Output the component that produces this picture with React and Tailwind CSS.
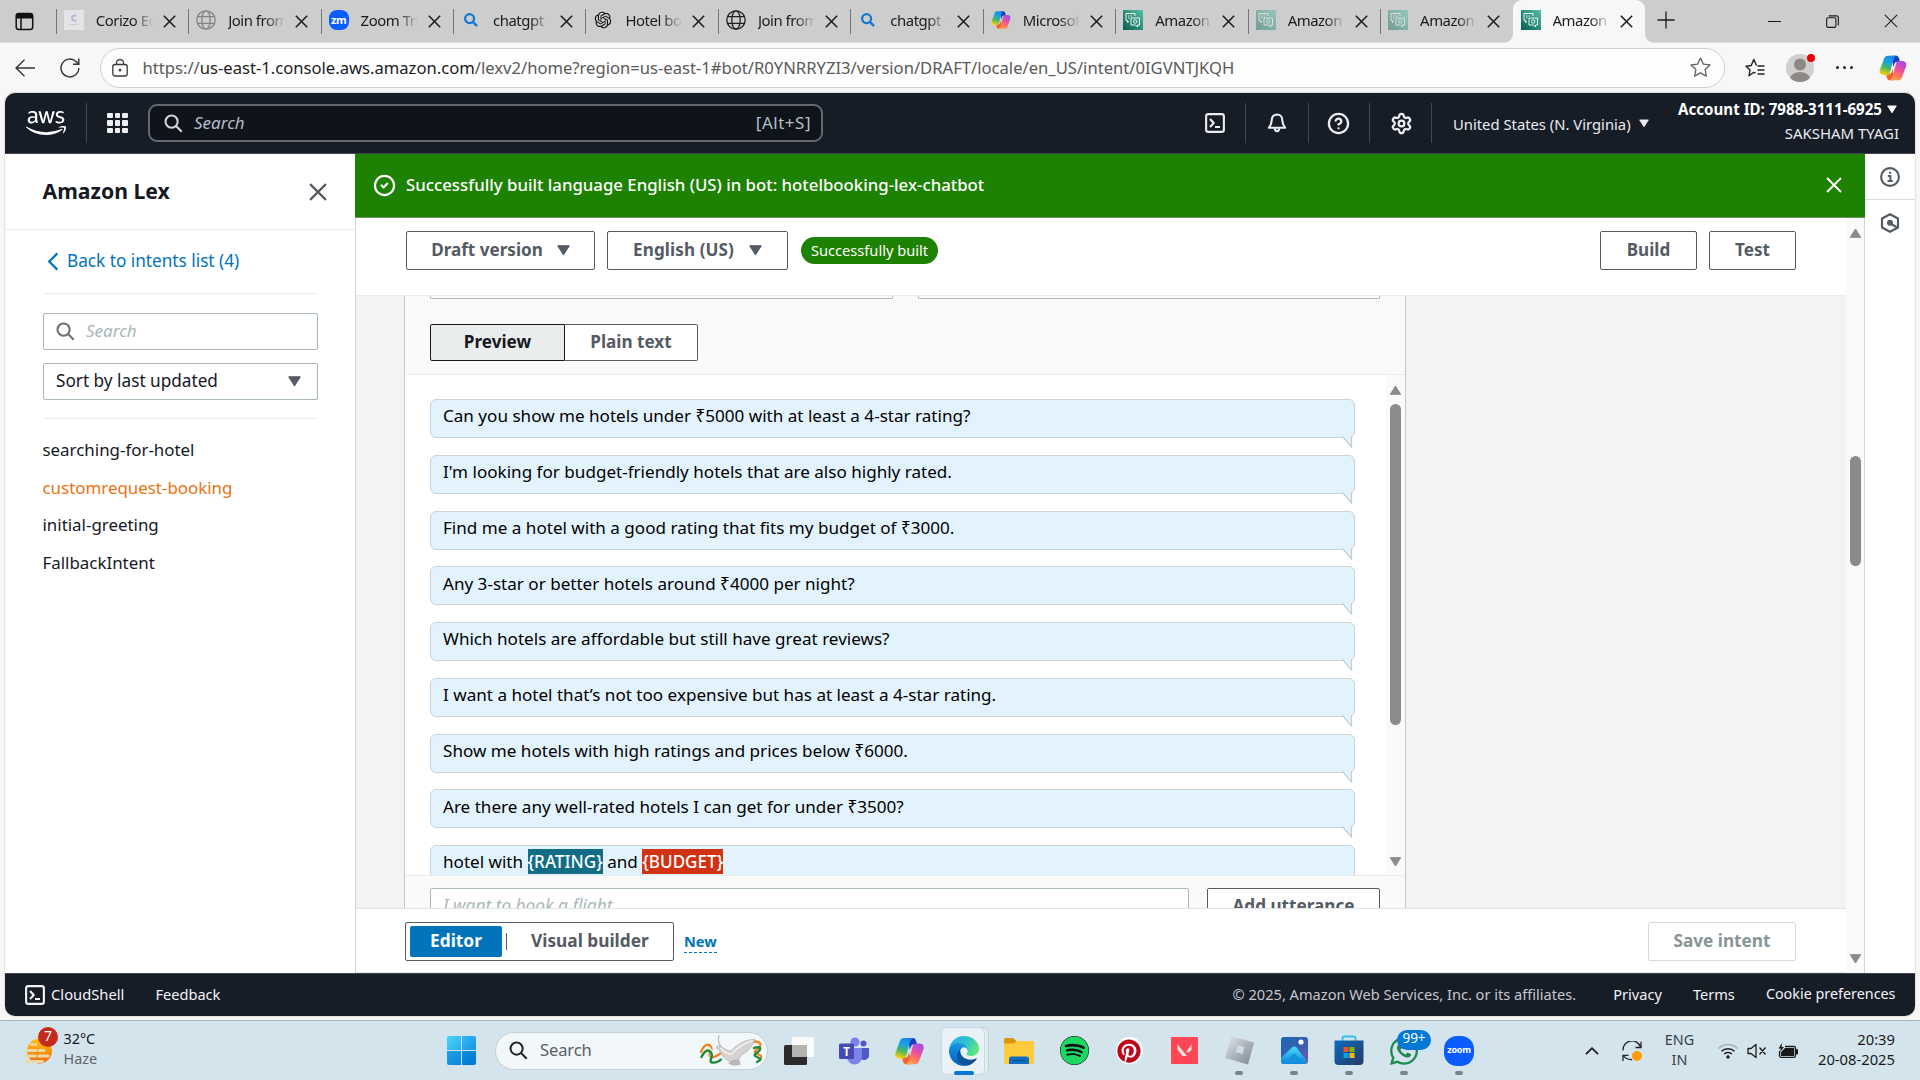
import { CircleHelp, CircleCheck, Settings } from "lucide-react";
import { FaAws, FaSpotify, FaPinterest, FaWhatsapp } from "react-icons/fa";
import { RiOpenaiFill } from "react-icons/ri";

/* ---------- small shared drawings ---------- */

function Cross({ className, w = 1.6 }) {
  return (
    <svg viewBox="0 0 16 16" className={className} fill="none" stroke="currentColor" strokeWidth={w}>
      <path d="M1 1 15 15M15 1 1 15" />
    </svg>
  );
}

function Caret({ className, up = false }) {
  return (
    <svg viewBox="0 0 12 10" className={className} fill="currentColor" stroke="currentColor" strokeWidth="1" strokeLinejoin="round">
      {up ? <path d="M6 1 11.2 9.3H.8Z" /> : <path d="M.8.7h10.4L6 9Z" />}
    </svg>
  );
}

function Magnifier({ className, w = 2 }) {
  return (
    <svg viewBox="0 0 20 20" className={className} fill="none" stroke="currentColor" strokeWidth={w}>
      <circle cx="8" cy="8" r="6.4" />
      <path d="m12.7 12.7 6 6" />
    </svg>
  );
}

function Globe({ className }) {
  return (
    <svg viewBox="0 0 20 20" className={className} fill="none" stroke="currentColor" strokeWidth="1.3">
      <circle cx="10" cy="10" r="9.2" />
      <ellipse cx="10" cy="10" rx="4.2" ry="9.2" />
      <path d="M1.6 6.6h16.8M1.6 13.4h16.8" />
    </svg>
  );
}

function Copilot({ className, id }) {
  return (
    <svg viewBox="0 0 32 32" className={className}>
      <defs>
        <linearGradient id={id + "a"} x1=".6" y1="0" x2=".3" y2="1">
          <stop offset="0" stopColor="#1f86e8" />
          <stop offset=".35" stopColor="#18a5e0" />
          <stop offset=".65" stopColor="#4fb75a" />
          <stop offset="1" stopColor="#ffd20a" />
        </linearGradient>
        <linearGradient id={id + "b"} x1=".8" y1="0" x2=".3" y2="1">
          <stop offset="0" stopColor="#a04df0" />
          <stop offset=".45" stopColor="#ee4f9a" />
          <stop offset=".75" stopColor="#ff7a5c" />
          <stop offset="1" stopColor="#ffa552" />
        </linearGradient>
      </defs>
      <path d="M14 2h5.500c2.500 0 3.300 2 4 5l.5 2h-3c-2 0-3 .6-3.600 2.600L16.500 15Z" fill="#1741c0" />
      <path d="M18 30h-5.500c-2.500 0-3.300-2-4-5L8 23h3c2 0 3-.6 3.600-2.600L15.500 17Z" fill="#f4602f" />
      <path d="M9.800 2C7 2 5.700 4.500 4.800 8L1.200 17.500C0 21 1.500 24 5.500 24H9c2 0 3-1 3.600-3L16 8c1-4 2.500-6 5-6Z" fill={`url(#${id}a)`} />
      <path d="M22.200 30c2.800 0 4.100-2.500 5-6l3.600-9.500C32 11 30.500 8 26.500 8H23c-2 0-3 1-3.600 3L16 24c-1 4-2.500 6-5 6Z" fill={`url(#${id}b)`} />
    </svg>
  );
}

function LexIcon({ className }) {
  return (
    <svg viewBox="0 0 20 20" className={className}>
      <defs>
        <linearGradient id="lex" x1="0" y1="1" x2="1" y2="0">
          <stop offset="0" stopColor="#055f4e" />
          <stop offset="1" stopColor="#56c0a7" />
        </linearGradient>
      </defs>
      <rect width="20" height="20" fill="url(#lex)" />
      <g fill="none" stroke="#fff" strokeWidth=".9">
        <path d="M6 11.500 4.500 12.500V10.500H3V3.500H12V6M5 6h1.500M7.500 6H9M5 8h1.500" />
        <path d="M8 8H16.500V15H14.500V17L12.500 15H8Z" />
        <circle cx="12.200" cy="11.500" r="1.700" />
      </g>
    </svg>
  );
}

function ShellIcon({ className }) {
  return (
    <svg viewBox="0 0 16 16" className={className} fill="none" stroke="currentColor" strokeWidth="1.700" strokeLinejoin="round">
      <rect x=".9" y=".9" width="14.200" height="14.200" rx="1.800" />
      <path d="m4 4.800 3 3.200-3 3.200M8 11.200h4" />
    </svg>
  );
}

function BellIcon({ className }) {
  return (
    <svg viewBox="0 0 16 16" className={className} fill="none" stroke="currentColor" strokeWidth="1.700" strokeLinejoin="round">
      <path d="M8 1.200c-2.500 0-4.200 1.800-4.200 4.300 0 3-1.100 4.600-2.300 6.300h13c-1.200-1.700-2.300-3.300-2.300-6.300C12.200 3 10.500 1.200 8 1.200Z" />
      <path d="M6.300 12.200c0 3.200 3.400 3.200 3.400 0" />
    </svg>
  );
}

/* ---------- browser chrome ---------- */

const tabs = [
  ["corizo", "Corizo Ed"],
  ["globeGray", "Join from"],
  ["zoom", "Zoom Tru"],
  ["search", "chatgpt -"],
  ["openai", "Hotel boo"],
  ["globe", "Join from"],
  ["search", "chatgpt -"],
  ["copilot", "Microsoft"],
  ["lex", "Amazon"],
  ["lexFaded", "Amazon"],
  ["lexFaded", "Amazon"],
  ["lex", "Amazon"],
];

function TabIcon({ kind }) {
  switch (kind) {
    case "corizo":
      return (
        <div className="flex h-5 w-5 flex-col items-center justify-center bg-[#e4e4e6]">
          <svg viewBox="0 0 20 20" className="h-5 w-5" fill="none">
            <path d="M12.500 5.500H10C7.500 5.500 7.500 10.500 10 10.500H12.500" stroke="#c3b4d8" strokeWidth="2.200" />
            <path d="M5.500 14.500h9" stroke="#cfcad6" strokeWidth="1" />
          </svg>
        </div>
      );
    case "globeGray":
      return <Globe className="h-5 w-5 text-[#828282]" />;
    case "globe":
      return <Globe className="h-5 w-5 text-[#1f1f1f]" />;
    case "zoom":
      return (
        <div className="flex h-5 w-5 items-center justify-center rounded-[8px] bg-[#0b5cff] pb-[2px] text-[11px] font-bold leading-none tracking-[-0.5px] text-white">
          zm
        </div>
      );
    case "search":
      return (
        <div className="flex h-5 w-5 items-center justify-center">
          <Magnifier className="h-[14px] w-[14px] text-[#1377d1]" w={3.2} />
        </div>
      );
    case "openai":
      return <RiOpenaiFill className="h-5 w-5 text-[#111]" />;
    case "copilot":
      return <Copilot className="h-5 w-5" id="cpt" />;
    case "lexFaded":
      return <LexIcon className="h-5 w-5 opacity-45" />;
    default:
      return <LexIcon className="h-5 w-5" />;
  }
}

function Tab({ kind, label, active, divider }) {
  return (
    <div className="relative flex h-[42px] w-[132.45px] shrink-0 items-center pl-[8px]">
      {active && (
        <div className="absolute inset-x-0 top-0 bottom-[-2px] rounded-t-[9px] bg-[#f7f7f7]">
          <svg viewBox="0 0 9 9" className="absolute bottom-px left-[-9px] h-[9px] w-[9px]">
            <path d="M9 0v9H0a9 9 0 0 0 9-9Z" fill="#f7f7f7" />
          </svg>
          <svg viewBox="0 0 9 9" className="absolute right-[-9px] bottom-px h-[9px] w-[9px]">
            <path d="M0 0v9h9a9 9 0 0 1-9-9Z" fill="#f7f7f7" />
          </svg>
        </div>
      )}
      {divider && <div className="absolute top-[9px] left-0 h-[25px] w-px bg-[#757575]" />}
      <div className="relative mt-[-2px] flex items-center">
        <TabIcon kind={kind} />
        <div className="ml-[12px] w-[57px] overflow-hidden text-[14.900px] leading-5 tracking-[-0.45px] whitespace-nowrap text-[#1b1b1b] [mask-image:linear-gradient(to_right,black_65%,transparent)]">
          {label}
        </div>
        <Cross className="mt-[2px] ml-[10px] h-[13px] w-[13px] text-[#1b1b1b]" w={1.9} />
      </div>
    </div>
  );
}

function TabBar() {
  return (
    <div className="flex h-[42px] shrink-0 items-center bg-[#cdcdcd]">
      <div className="flex w-[55.700px] shrink-0 pl-[15px]">
        <svg viewBox="0 0 19 19" className="h-[19px] w-[19px]" fill="none" stroke="#111" strokeWidth="1.500">
          <rect x="1.200" y="1.500" width="16.500" height="16" rx="2.500" />
          <path d="M1.500 3.500h16M1.500 5h16" strokeWidth="3" />
          <path d="M6 6v11" />
        </svg>
      </div>
      {tabs.map(([kind, label], i) => (
        <Tab key={i} kind={kind} label={label} active={i === 11} divider={i < 11} />
      ))}
      <svg viewBox="0 0 18 18" className="mt-[-3px] ml-[12px] h-[18px] w-[18px] shrink-0" stroke="#1b1b1b" strokeWidth="1.300">
        <path d="M9 .5v17M.5 9h17" />
      </svg>
      <div className="ml-auto flex items-center pr-[22px] text-[#1b1b1b]">
        <div className="h-px w-[13px] bg-[#1b1b1b]" />
        <svg viewBox="0 0 14 14" className="ml-[45px] h-[13px] w-[13px]" fill="none" stroke="currentColor" strokeWidth="1.200">
          <rect x=".7" y="3" width="10" height="10.300" rx="1.500" />
          <path d="M3 1h8.300a2 2 0 0 1 2 2v8" />
        </svg>
        <Cross className="ml-[45px] h-[14px] w-[14px]" w={1.2} />
      </div>
    </div>
  );
}

function AddressBar() {
  return (
    <div className="flex h-[51px] shrink-0 items-center border-t border-[#dedede] bg-[#f7f7f7] pb-px">
      <svg viewBox="0 0 20 18" className="ml-[15px] h-[18px] w-5" fill="none" stroke="#333" strokeWidth="1.400">
        <path d="M20 9H1.200M9.500.7 1 9l8.500 8.300" />
      </svg>
      <svg viewBox="0 0 20 20" className="ml-[25px] h-5 w-5" fill="none" stroke="#333" strokeWidth="1.400">
        <path d="M18.800 10A8.900 8.900 0 1 1 16.200 3.700L18.500 6M18.800.5V6.300H13" />
      </svg>
      <div className="ml-[20px] flex h-[40px] w-[1625px] items-center rounded-full border border-[#cfcfcf] bg-[#fdfdfd]">
        <svg viewBox="0 0 16 18" className="ml-[11px] h-[18px] w-4" fill="none" stroke="#3a3a3a" strokeWidth="1.300">
          <rect x=".8" y="5.500" width="14.400" height="11.500" rx="2.200" />
          <path d="M4.500 5.500V4a3.500 3.500 0 0 1 7 0v1.500" />
          <circle cx="8" cy="11.200" r=".7" fill="#3a3a3a" />
        </svg>
        <div className="ml-[14.500px] text-[16.620px] leading-6 whitespace-nowrap text-[#5a5a5a]">
          https://<span className="text-[#1c1c1c]">us-east-1.console.aws.amazon.com</span>
          /lexv2/home?region=us-east-1#bot/R0YNRRYZI3/version/DRAFT/locale/en_US/intent/0IGVNTJKQH
        </div>
        <svg viewBox="0 0 20 20" className="mr-[13px] ml-auto h-[21px] w-[21px]" fill="none" stroke="#606060" strokeWidth="1.200" strokeLinejoin="round">
          <path d="m10 1 2.700 5.800 6.300.8-4.600 4.300 1.200 6.300L10 15.100l-5.600 3.100 1.200-6.300L1 7.600l6.300-.8Z" />
        </svg>
      </div>
      <svg viewBox="0 0 20 20" className="ml-[20px] h-5 w-5" fill="none" stroke="#222" strokeWidth="1.400" strokeLinejoin="round">
        <path d="M10.500 15.200 8.800 14.300 4 17.800l1-5.700L1 8.200l5.200-.7L8.800 1.500l2.700 6M12.500 8h7M12.500 12h7M12.500 16h7" />
      </svg>
      <div className="relative ml-[21px] h-7 w-7">
        <svg viewBox="0 0 28 28" className="h-7 w-7">
          <clipPath id="face"><circle cx="14" cy="14" r="14" /></clipPath>
          <g clipPath="url(#face)">
            <rect width="28" height="28" fill="#d2d0cd" />
            <circle cx="14" cy="10.500" r="6" fill="#8b8886" />
            <ellipse cx="14" cy="24.500" rx="10" ry="6.500" fill="#8b8886" />
          </g>
        </svg>
        <div className="absolute top-0 right-[-1px] h-2 w-2 rounded-full bg-[#e60000]" />
      </div>
      <div className="ml-[22px] flex gap-[4px]">
        <div className="h-[3px] w-[3px] rounded-full bg-[#222]" />
        <div className="h-[3px] w-[3px] rounded-full bg-[#222]" />
        <div className="h-[3px] w-[3px] rounded-full bg-[#222]" />
      </div>
      <Copilot className="ml-[26px] h-7 w-7" id="cpb" />
    </div>
  );
}

/* ---------- AWS console ---------- */

function NavHeader() {
  return (
    <div className="flex h-[61px] shrink-0 items-center border-b border-[#424650] bg-[#161d27] text-[#ebebf0]">
      <FaAws className="ml-[20.500px] h-[32px] w-[40px] text-white" />
      <div className="ml-[20.500px] h-[40px] w-px bg-[#424650]" />
      <div className="ml-[20px] grid grid-cols-3 gap-[2px]">
        {Array.from({ length: 9 }, (_, i) => (
          <div key={i} className="h-[5.500px] w-[5.500px] rounded-[1px] bg-[#f0f0f4]" />
        ))}
      </div>
      <div className="ml-[20.500px] flex h-[38px] w-[675px] items-center rounded-[9px] border-2 border-[#656871] bg-[#0f141a] px-[12px] text-[17px] text-[#b6bec9]">
        <Magnifier className="ml-[2px] h-[19px] w-[19px] text-[#d5d5dd]" w={2.2} />
        <span className="mt-[-1px] ml-[11px] leading-6 italic">Search</span>
        <span className="mt-[-1px] mr-[-2px] ml-auto leading-6 tracking-[0.5px]">[Alt+S]</span>
      </div>
      <ShellIcon className="ml-[382px] h-5 w-5" />
      <div className="ml-[20px] h-[40px] w-px bg-[#424650]" />
      <BellIcon className="ml-[21px] h-5 w-5" />
      <div className="ml-[21px] h-[40px] w-px bg-[#424650]" />
      <CircleHelp className="ml-[18px] h-[23px] w-[23px]" strokeWidth={2.4} />
      <div className="ml-[19px] h-[40px] w-px bg-[#424650]" />
      <Settings className="ml-[20px] h-[23px] w-[23px]" strokeWidth={2.4} />
      <div className="ml-[18px] h-[40px] w-px bg-[#424650]" />
      <span className="mt-[1px] ml-[21px] text-[14.800px] leading-6 whitespace-nowrap">United States (N. Virginia)</span>
      <Caret className="mt-px ml-[8px] h-[9px] w-[10px]" />
      <div className="mt-[-4px] mr-[16px] ml-auto flex flex-col items-end text-[14.950px] leading-6">
        <div className="flex items-center gap-[5px] font-bold text-white">
          <span className="text-[15.100px] whitespace-nowrap">Account ID: 7988-3111-6925</span>
          <Caret className="mr-[2px] h-[9px] w-[10px]" />
        </div>
        <span>SAKSHAM TYAGI</span>
      </div>
    </div>
  );
}

const intents = ["searching-for-hotel", "customrequest-booking", "initial-greeting", "FallbackIntent"];

function Sidebar() {
  return (
    <div className="flex w-[350px] shrink-0 flex-col bg-white text-[17px] text-[#16191f]">
      <div className="flex h-[76px] items-center justify-between border-b border-[#eaeded] pr-[28px] pl-[37.500px]">
        <span className="mt-[-1px] text-[21.200px] leading-8 font-bold">Amazon Lex</span>
        <Cross className="h-[18px] w-[18px] text-[#545b64]" w={2} />
      </div>
      <div className="flex flex-col pr-[37px] pl-[38px]">
        <div className="flex h-[64px] items-center border-b border-[#eaeded] pl-[4px] text-[#0073bb]">
          <svg viewBox="0 0 12 20" className="h-[19px] w-[12px]" fill="none" stroke="currentColor" strokeWidth="2.400">
            <path d="M10.500 1.500 2 10l8.500 8.500" />
          </svg>
          <span className="mt-[-1px] ml-[8px] text-[17.200px] leading-6">Back to intents list (4)</span>
        </div>
        <div className="mt-[19px] flex h-[37px] items-center rounded-[2px] border border-[#aab7b8] pl-[12px]">
          <Magnifier className="h-[19px] w-[19px] text-[#687078]" w={2.2} />
          <span className="mt-[-1px] ml-[11px] leading-6 text-[#aab7b8] italic">Search</span>
        </div>
        <div className="mt-[13px] flex h-[37px] items-center justify-between rounded-[2px] border border-[#aab7b8] pr-[16px] pl-[12px]">
          <span className="mt-[-1px] text-[17.200px] leading-6">Sort by last updated</span>
          <Caret className="h-[11px] w-[13px] text-[#545b64]" />
        </div>
        <div className="mt-[18px] border-b border-[#eaeded]" />
        <div className="mt-[12px] ml-[-0.500px] flex flex-col text-[16.900px]">
          {intents.map((name, i) => (
            <div key={name} className={i === 1 ? "h-[37.700px] leading-[37.700px] text-[#ec7211]" : "h-[37.700px] leading-[37.700px]"}>
              {name}
            </div>
          ))}
        </div>
      </div>
    </div>
  );
}

const utterances = [
  "Can you show me hotels under ₹5000 with at least a 4-star rating?",
  "I'm looking for budget-friendly hotels that are also highly rated.",
  "Find me a hotel with a good rating that fits my budget of ₹3000.",
  "Any 3-star or better hotels around ₹4000 per night?",
  "Which hotels are affordable but still have great reviews?",
  "I want a hotel that’s not too expensive but has at least a 4-star rating.",
  "Show me hotels with high ratings and prices below ₹6000.",
  "Are there any well-rated hotels I can get for under ₹3500?",
  <>
    hotel with <span className="bg-[#116d86] text-white">{"{RATING}"}</span> and{" "}
    <span className="bg-[#d13212] text-white">{"{BUDGET}"}</span>
  </>,
];

function Bubble({ children }) {
  return (
    <div className="relative mb-[16.750px] h-[39px] w-[925px] shrink-0 rounded-[6px] border border-[#c8d3da] bg-[#e2f3fe] pl-[12px]">
      <div className="mt-[3.400px] text-[17.080px] leading-[26px] whitespace-nowrap [&>span]:py-px [&>span]:font-medium [&>span]:leading-none">{children}</div>
      <svg viewBox="0 0 12 13" className="absolute right-[1px] bottom-[-11px] h-[13px] w-[12px]">
        <path d="M1.500 0 10.500 11.500V0Z" fill="#e2f3fe" />
        <path d="M1.500 1.500 10.500 12V1" fill="none" stroke="#c4cdd3" strokeWidth="1.200" />
      </svg>
    </div>
  );
}

function Scrollbar({ thumb, className }) {
  return (
    <div className={className}>
      <Caret className="h-[10px] w-[13px] text-[#8b8b8b]" up />
      <div className={thumb} />
      <Caret className="mt-auto h-[10px] w-[13px] text-[#8b8b8b]" />
    </div>
  );
}

function UtterancePanel() {
  return (
    <div className="flex h-full w-[1002px] shrink-0 flex-col border-x border-[#c3c9cc] bg-[#fafafa]">
      <div className="flex h-[3px] shrink-0 gap-[25px] pl-[25px]">
        <div className="w-[463px] rounded-b-[2px] border border-t-0 border-[#aab7b8] bg-white" />
        <div className="w-[462px] rounded-b-[2px] border border-t-0 border-[#aab7b8] bg-white" />
      </div>
      <div className="mt-[25px] ml-[25px] flex h-[37px] shrink-0 text-[17.150px] leading-[34px] font-bold">
        <div className="w-[135px] rounded-l-[2px] border border-[#16191f] bg-[#eaeded] text-center text-[#16191f]">Preview</div>
        <div className="w-[133px] rounded-r-[2px] border border-l-0 border-[#545b64] bg-white text-center text-[#545b64]">Plain text</div>
      </div>
      <div className="mt-[13px] flex h-[502px] shrink-0 overflow-hidden border-y border-[#eaeded] bg-white">
        <div className="flex flex-1 flex-col pt-[24px] pl-[25px]">
          {utterances.map((u, i) => (
            <Bubble key={i}>{u}</Bubble>
          ))}
        </div>
        <Scrollbar
          className="flex w-[19px] flex-col items-center bg-[#fafafa] pt-[10px] pb-[8px]"
          thumb="mt-[9px] h-[321px] w-[11px] rounded-full bg-[#8b8b8b]"
        />
      </div>
      <div className="mt-[12px] flex shrink-0 pl-[25px]">
        <div className="h-[38px] w-[759px] rounded-[2px] border border-[#aab7b8] bg-white pl-[12px] text-[17.300px] leading-[34px] text-[#aab7b8] italic">
          I want to book a flight
        </div>
        <div className="ml-[18px] h-[38px] w-[173px] rounded-[2px] border border-[#545b64] bg-white text-center text-[17.150px] leading-[34px] font-bold text-[#545b64]">
          Add utterance
        </div>
      </div>
    </div>
  );
}

const btn = "flex h-[39px] items-center justify-center rounded-[2px] border border-[#545b64] bg-white pb-[2px] text-[17.100px] font-bold text-[#545b64]";

function Main() {
  return (
    <div className="flex min-w-0 flex-1 flex-col">
      <div className="flex h-[64px] shrink-0 items-center border-b border-[#6d8f6a] bg-[#1d8102] pr-[23px] pl-[17.500px] text-white">
        <CircleCheck className="h-[23px] w-[23px]" strokeWidth={2.3} />
        <span className="mt-[-2px] ml-[10.500px] text-[16.800px] leading-6 font-medium">
          Successfully built language English (US) in bot: hotelbooking-lex-chatbot
        </span>
        <Cross className="mt-[-1px] ml-auto h-[16px] w-[16px]" w={1.900} />
      </div>
      <div className="flex min-h-0 flex-1 border-l border-[#d0d5d8]">
        <div className="flex min-w-0 flex-1 flex-col">
          <div className="flex h-[78px] shrink-0 items-start border-b border-[#eaeded] bg-white pt-[13px] pr-[50px] pl-[50px]">
            <div className={btn + " w-[189px] gap-[14px]"}>
              Draft version <Caret className="mt-[2px] h-[11px] w-[13px]" />
            </div>
            <div className={btn + " ml-[12px] w-[181px] gap-[15px]"}>
              <span className="tracking-[0.1px]">English (US)</span> <Caret className="mt-[2px] h-[11px] w-[13px]" />
            </div>
            <div className="mt-[6px] ml-[13px] flex h-[27px] w-[137px] items-center justify-center rounded-full bg-[#1d8102] text-[14.650px] text-white">
              Successfully built
            </div>
            <div className={btn + " ml-auto w-[97px]"}>Build</div>
            <div className={btn + " ml-[12px] w-[87px]"}>Test</div>
          </div>
          <div className="flex h-[612px] shrink-0 overflow-hidden bg-[#f2f4f4] pl-[48px]">
            <UtterancePanel />
          </div>
          <div className="flex h-[65px] shrink-0 items-center border-y border-[#e1e5e6] bg-white pr-[50px] pl-[49px]">
            <div className="mt-px flex h-[39px] w-[269px] items-center rounded-[2px] border border-[#545b64] text-[17.300px] font-bold text-[#545b64]">
              <div className="ml-[4px] flex h-[31px] w-[92px] items-center justify-center rounded-[2px] bg-[#0073bb] pb-[1px] text-white">Editor</div>
              <div className="ml-[4px] h-[17px] w-px bg-[#545b64]" />
              <div className="mt-[-1px] ml-[24px] whitespace-nowrap">Visual builder</div>
            </div>
            <div className="mt-[2px] ml-[10px] border-b border-dashed border-[#0073bb] text-[14.600px] leading-[21px] font-bold text-[#0073bb]">New</div>
            <div className="mt-px ml-auto flex h-[39px] w-[148px] items-center justify-center rounded-[2px] border border-[#d5dbdb] bg-white pb-[1px] text-[17.200px] font-bold text-[#879596]">
              Save intent
            </div>
          </div>
        </div>
        <Scrollbar
          className="flex w-[19px] flex-col items-center border-r border-[#d0d5d8] bg-[#fafafa] pt-[10px] pb-[9px]"
          thumb="mt-[218px] h-[110px] w-[11px] rounded-full bg-[#8b8b8b]"
        />
      </div>
    </div>
  );
}

function RightRail() {
  return (
    <div className="flex w-[50px] shrink-0 flex-col items-center bg-white text-[#545b64]">
      <div className="flex h-[46px] w-full items-center justify-center border-b border-[#d5dbdb]">
        <svg viewBox="0 0 20 20" className="h-5 w-5" fill="none" stroke="currentColor">
          <circle cx="10" cy="10" r="8.900" strokeWidth="2.100" />
          <path d="M7.800 8.900h2.600v5M7.500 14h5.200M9 5.800h2.200" strokeWidth="2" />
        </svg>
      </div>
      <svg viewBox="0 0 20 20" className="mt-[13px] h-5 w-5" fill="none" stroke="currentColor" strokeWidth="2.200" strokeLinejoin="round">
        <path d="m10 1.200 8 4.300v9L10 18.800 2 14.500v-9Z" />
        <circle cx="10" cy="9.700" r="1.900" fill="currentColor" />
        <path d="m11 11 5.500 3" />
      </svg>
    </div>
  );
}

function Footer() {
  return (
    <div className="flex h-[43px] shrink-0 items-center border-t border-[#424650] bg-[#161d27] text-[14.600px] text-[#f3f3f7] [&>span]:mt-[-2px] [&>span]:leading-6 [&>span]:whitespace-nowrap">
      <ShellIcon className="ml-[20px] h-5 w-5" />
      <span className="ml-[6px] text-[14.750px]">CloudShell</span>
      <span className="ml-[31px]">Feedback</span>
      <span className="ml-auto text-[#c6c6cd]">© 2025, Amazon Web Services, Inc. or its affiliates.</span>
      <span className="ml-[37px]">Privacy</span>
      <span className="ml-[31px]">Terms</span>
      <span className="mr-[19.500px] ml-[31px] text-[14.350px]">Cookie preferences</span>
    </div>
  );
}

/* ---------- Windows taskbar ---------- */

function Dove() {
  return (
    <svg viewBox="0 0 64 32" className="h-8 w-16" fill="none" strokeLinecap="round">
      <g strokeWidth="2.400">
        <path d="M2 17C5 9 10 8 12 12s-4 9 0 10 7-2 10-4" stroke="#f58220" />
        <path d="M3 20C6 12 10.500 11 12 15s-3 8.500 1 9.500 8-2 10-4" stroke="#f4f4f0" strokeWidth="1.500" />
        <path d="M2.500 22C6 15 9 14 12 17.500s-3 9.500 1 10 7-1 9-3" stroke="#1c8a38" />
        <path d="M51 8C56 5 63 7 61 11s-7 4-4 7 6 1 5 5" stroke="#f58220" />
        <path d="M55 13c5-2 8 0 5 3s-7 4-2 6 4 3 0 5" stroke="#1c8a38" />
      </g>
      <path d="M20 1C19 6 20 9 23 12 26 14 29 16 32 16 38 9 46 5 56 4 53 12 49 17 42 20 41 24 38 27 33 27 27 26 22 20 20.500 15.500L17 12.500C18 10.500 20 10.500 21.500 11.500 19.500 8 18.500 4 20 1Z" fill="#d6d2d2" stroke="#aaa5a8" strokeWidth=".6" />
      <path d="M34 25 29 28.500C33 30.500 37 31.500 42 29.500L40 24Z" fill="#bcb6ba" />
      <path d="M22 13.500c4 4.500 8 6 11 5 6-7 12-10 20-13" stroke="#f2f0ef" strokeWidth="1.800" />
    </svg>
  );
}

function Edge() {
  return (
    <svg viewBox="0 0 256 256" className="h-[30px] w-[30px]">
      <defs>
        <linearGradient id="e1" x1="0" y1=".7" x2="1" y2=".7"><stop offset="0" stopColor="#0c59a4" /><stop offset="1" stopColor="#114a8b" /></linearGradient>
        <linearGradient id="e2" x1=".6" y1="0" x2=".3" y2="1"><stop offset="0" stopColor="#1b9de2" /><stop offset=".5" stopColor="#0f7fd8" /><stop offset="1" stopColor="#0061c2" /></linearGradient>
        <linearGradient id="e3" x1="0" y1=".3" x2="1" y2=".7"><stop offset="0" stopColor="#2baee8" /><stop offset=".5" stopColor="#2fc2cd" /><stop offset="1" stopColor="#66eb6e" /></linearGradient>
      </defs>
      <g transform="translate(-4.630 -4.920)">
        <path fill="url(#e1)" d="M235.680 195.460a93.730 93.730 0 0 1-10.540 4.710 101.870 101.870 0 0 1-35.900 6.460c-47.320 0-88.540-32.550-88.540-74.320A31.480 31.480 0 0 1 117.130 105c-42.800 1.800-53.800 46.400-53.800 72.530 0 73.880 68.090 81.370 82.760 81.370 7.910 0 19.840-2.300 27-4.560l1.310-.44a128.340 128.340 0 0 0 66.600-52.800 4 4 0 0 0-5.320-5.640Z" />
        <path fill="url(#e2)" d="M110.340 246.340A79.200 79.200 0 0 1 87.600 225a80.720 80.720 0 0 1 29.530-120c3.120-1.470 8.450-4.130 15.540-4a32.350 32.350 0 0 1 25.690 13 31.880 31.880 0 0 1 6.360 18.660c0-.21 24.460-79.600-80-79.600-43.900 0-80 41.660-80 78.210a130.150 130.150 0 0 0 12.110 56 128 128 0 0 0 156.380 67.110 75.550 75.550 0 0 1-62.780-8Z" />
        <path fill="url(#e3)" d="M156.940 153.780c-.81 1.050-3.300 2.500-3.300 5.660 0 2.610 1.700 5.120 4.720 7.230 14.380 10 41.490 8.680 41.560 8.680a59.560 59.560 0 0 0 30.270-8.350 61.380 61.380 0 0 0 30.430-52.880c.26-22.410-8-37.310-11.340-43.910C228.090 28.760 182.350 4.920 132.610 4.920a128 128 0 0 0-128 126.200c.48-36.540 36.800-66.050 80-66.050 3.500 0 23.460.34 42 10.070 16.340 8.580 24.900 18.940 30.850 29.210 6.180 10.670 7.280 24.150 7.280 29.520s-2.740 13.330-7.800 19.910Z" />
      </g>
    </svg>
  );
}

function TaskView() {
  return (
    <svg viewBox="0 0 30 28" className="h-7 w-[30px]">
      <rect x="0" y="8" width="23" height="20" rx="1.500" fill="#2b2b2b" />
      <rect x="8" y="0" width="22" height="20" rx="1.500" fill="#fafafa" />
      <path d="M8 8h15v12H8Z" fill="#b3b3b3" />
    </svg>
  );
}

function Teams() {
  return (
    <svg viewBox="0 0 30 28" className="h-7 w-[30px]">
      <circle cx="24.500" cy="6.500" r="3" fill="#4f58c9" />
      <path d="M22 11h8v8a5 5 0 0 1-8 3Z" fill="#4f58c9" />
      <circle cx="16" cy="5" r="4.600" fill="#7b83eb" />
      <path d="M8 11h15v9a7.300 7.300 0 0 1-15 0Z" fill="#7b83eb" />
      <rect x="0" y="6.500" width="15" height="15.500" rx="1.500" fill="#444ab5" />
      <text x="7.500" y="18.500" textAnchor="middle" fontSize="11.500" fontWeight="700" fill="#fff" fontFamily="Noto Sans, sans-serif">T</text>
    </svg>
  );
}

function Folder() {
  return (
    <svg viewBox="0 0 30 27" className="h-[27px] w-[30px]">
      <path d="M0 2.500A1.500 1.500 0 0 1 1.500 1H9l3.500 3H28a2 2 0 0 1 2 2v4H0Z" fill="#d9970c" />
      <path d="M0 6.500H10L13 4H28.500A1.500 1.500 0 0 1 30 5.500V25.500A1.500 1.500 0 0 1 28.500 27H1.500A1.500 1.500 0 0 1 0 25.500Z" fill="#fdcb3c" />
      <path d="M5 27V22a2.500 2.500 0 0 1 2.500-2.500h15A2.500 2.500 0 0 1 25 22v5Z" fill="#0f6fc2" />
      <path d="M8.500 23.500h13" stroke="#0a4f91" strokeWidth="1.300" />
    </svg>
  );
}

function Valorant() {
  return (
    <svg viewBox="0 0 27 27" className="h-[27px] w-[27px]">
      <rect width="27" height="27" rx="1" fill="#ff4655" />
      <path d="M6.500 7.500v5L11.500 19H16Z" fill="#f6e6e2" />
      <path d="M20.500 7.500v5L18.300 15.300H15Z" fill="#f6e6e2" />
    </svg>
  );
}

function Roblox() {
  return (
    <svg viewBox="0 0 30 30" className="mt-[-1px] h-[30px] w-[30px]">
      <defs><linearGradient id="rb" x1="0" y1="0" x2="1" y2="1"><stop offset="0" stopColor="#e6eaee" /><stop offset=".5" stopColor="#adb5bd" /><stop offset="1" stopColor="#7d858e" /></linearGradient></defs>
      <path fillRule="evenodd" d="M7 1 30 7.500 24 29.500 1 23ZM13.500 10.500 12 17l6.500 1.800 1.700-6.500Z" fill="url(#rb)" />
      <path d="M13.500 10.500 12 17l6.500 1.800 1.700-6.500Z" fill="#cfdbe2" />
    </svg>
  );
}

function Photos() {
  return (
    <svg viewBox="0 0 27 27" className="h-[27px] w-[27px]">
      <defs>
        <linearGradient id="ph" x1="0" y1="0" x2="1" y2="1"><stop offset="0" stopColor="#1b66b8" /><stop offset=".6" stopColor="#3b5fae" /><stop offset="1" stopColor="#8a4fb0" /></linearGradient>
        <linearGradient id="ph2" x1="0" y1="0" x2="0" y2="1"><stop offset="0" stopColor="#4adcf5" /><stop offset="1" stopColor="#0c84dc" /></linearGradient>
      </defs>
      <rect width="27" height="27" rx="3" fill="url(#ph)" />
      <path d="M0 21 11 10.500c1.500-1.400 3-1.400 4.500 0L26 24a3 3 0 0 1-2.500 3H3a3 3 0 0 1-3-3Z" fill="url(#ph2)" />
      <path d="M3 26.500 13 16l11 10.500Z" fill="#1691e0" />
      <circle cx="20" cy="5" r="2.600" fill="#fff" />
    </svg>
  );
}

function Store() {
  return (
    <svg viewBox="0 0 30 30" className="mt-[-1px] h-[30px] w-[30px]">
      <defs><linearGradient id="st" x1="0" y1="0" x2="1" y2="1"><stop offset="0" stopColor="#0d6cbd" /><stop offset="1" stopColor="#243a66" /></linearGradient></defs>
      <path d="M8.500 6V3.200A1.700 1.700 0 0 1 10.200 1.500h9.600a1.700 1.700 0 0 1 1.700 1.700V6" fill="none" stroke="#35bdf0" strokeWidth="1.800" />
      <path d="M.5 5.500h29V26a4 4 0 0 1-4 4h-21a4 4 0 0 1-4-4Z" fill="url(#st)" />
      <rect x="9.500" y="12" width="5" height="5" fill="#f25022" />
      <rect x="15.500" y="12" width="5" height="5" fill="#7fba00" />
      <rect x="9.500" y="18" width="5" height="5" fill="#00a4ef" />
      <rect x="15.500" y="18" width="5" height="5" fill="#ffb900" />
    </svg>
  );
}

function WhatsApp() {
  return (
    <div className="relative">
      <FaWhatsapp className="h-[32px] w-[32px] text-[#1d8a50]" />
      <div className="absolute top-[-5px] left-[9px] flex h-[20px] w-[34px] items-center justify-center rounded-full bg-[#0078d4] pb-px text-[13.500px] leading-none text-white">
        99+
      </div>
    </div>
  );
}

function TaskIcon({ children, dot }) {
  return (
    <div className="relative flex h-[60px] w-[55px] shrink-0 items-center justify-center">
      {children}
      {dot && <div className="absolute bottom-[6px] h-[4px] w-[8px] rounded-full bg-[#7b8288]" />}
    </div>
  );
}

function Taskbar() {
  return (
    <div className="flex h-[60px] shrink-0 items-center border-t border-[#a9b3bb] bg-[#d4e4ed] text-[#191919]">
      <div className="relative ml-[24px] h-[32px] w-[30px]">
        <svg viewBox="0 0 30 32" className="h-8 w-[30px]">
          <defs><linearGradient id="sun" x1="0" y1="0" x2="0" y2="1"><stop offset="0" stopColor="#ffc40d" /><stop offset="1" stopColor="#f0690f" /></linearGradient></defs>
          <circle cx="15.500" cy="16" r="12.500" fill="url(#sun)" />
          <path d="M3 15.500h9M15 15.500h5M1.500 21h10M15 21h9M2.500 26.500h16" stroke="#ead9a4" strokeWidth="3" strokeLinecap="round" />
          <path d="M7 9.500h5" stroke="#ead9a4" strokeWidth="2.500" strokeLinecap="round" />
        </svg>
        <div className="absolute top-[-8px] left-[14px] flex h-[20px] w-[20px] items-center justify-center rounded-full bg-[#c42b1c] pb-px text-[14px] leading-none text-white">7</div>
      </div>
      <div className="mt-[-4px] ml-[9.500px] flex w-[36px] flex-col text-[14.400px] leading-[20px] whitespace-nowrap">
        <span>32°C</span>
        <span className="text-[#5c6468]">Haze</span>
      </div>
      <div className="ml-[347.500px] grid h-[29px] w-[29px] shrink-0 grid-cols-2 gap-px">
        <div className="rounded-tl-[2px] bg-gradient-to-br from-[#4fd0fb] to-[#22b1f0]" />
        <div className="rounded-tr-[2px] bg-gradient-to-br from-[#2fb8f3] to-[#1596e4]" />
        <div className="rounded-bl-[2px] bg-gradient-to-br from-[#1fa3ea] to-[#0c84da]" />
        <div className="rounded-br-[2px] bg-gradient-to-br from-[#128fe2] to-[#0074d0]" />
      </div>
      <div className="ml-[19px] flex h-[38px] w-[273px] shrink-0 items-center rounded-full border border-[#c3d1d9] bg-[#f2f7fa]">
        <Magnifier className="ml-[13px] h-[19px] w-[19px] text-[#222]" w={2.1} />
        <span className="mt-[-1px] ml-[12px] text-[16.500px] leading-6 tracking-[-0.1px] text-[#5b6063]">Search</span>
        <div className="mr-[4px] ml-auto">
          <Dove />
        </div>
      </div>
      <div className="ml-[3.500px] flex">
        <TaskIcon><TaskView /></TaskIcon>
        <TaskIcon><Teams /></TaskIcon>
        <TaskIcon><Copilot className="h-[30px] w-[31px]" id="cpk" /></TaskIcon>
        <TaskIcon>
          <div className="absolute top-[6px] left-[9px] h-[48px] w-[43px] rounded-[6px] border border-[#c3d0d8] bg-[#e1ecf3]" />
          <div className="absolute top-[6px] left-[4px] h-[48px] w-[44px] rounded-[6px] border border-[#cdd9e0] bg-[#ebf2f7]" />
          <div className="relative"><Edge /></div>
          <div className="absolute bottom-[6px] h-[4px] w-[20px] rounded-full bg-[#0078d4]" />
        </TaskIcon>
        <TaskIcon><Folder /></TaskIcon>
        <TaskIcon><FaSpotify className="h-[29px] w-[29px] rounded-full bg-[#111] text-[#1ed760]" /></TaskIcon>
        <TaskIcon><div className="rounded-full bg-white p-[1.500px]"><FaPinterest className="h-[24px] w-[24px] text-[#bd081c]" /></div></TaskIcon>
        <TaskIcon><Valorant /></TaskIcon>
        <TaskIcon dot><Roblox /></TaskIcon>
        <TaskIcon dot><Photos /></TaskIcon>
        <TaskIcon dot><Store /></TaskIcon>
        <TaskIcon dot><WhatsApp /></TaskIcon>
        <TaskIcon dot>
          <div className="flex h-[30px] w-[30px] items-center justify-center rounded-[13px] bg-[#0b5cff] pb-[2px] text-[9px] leading-none font-bold tracking-[-0.3px] text-white">zoom</div>
        </TaskIcon>
      </div>
      <div className="ml-auto flex items-center pr-[25px]">
        <svg viewBox="0 0 14 8" className="h-[8px] w-[14px]" fill="none" stroke="#191919" strokeWidth="1.700"><path d="M1 7.200 7 1.200l6 6" /></svg>
        <div className="relative ml-[23px] h-5 w-5">
          <svg viewBox="0 0 20 20" className="h-5 w-5" fill="none" stroke="#222" strokeWidth="1.300">
            <path d="M1 9.500A9 9 0 0 1 18.500 6M19 .8V6.500H13.500M10 18.500A9 9 0 0 1 1.500 14.500M1 20V14.300H6.500" />
          </svg>
          <div className="absolute right-0 bottom-0 h-[10px] w-[10px] rounded-full bg-[#ff9b06]" />
        </div>
        <div className="mt-[-1px] ml-[22.500px] flex w-[30px] flex-col items-center text-[14.400px] leading-[20px] text-[#3b4146]">
          <span>ENG</span>
          <span>IN</span>
        </div>
        <svg viewBox="0 0 20 16" className="ml-[23.500px] h-4 w-5" fill="none" strokeWidth="1.500">
          <path d="M.7 5.500a13 13 0 0 1 18.600 0" stroke="#9fb0ba" />
          <path d="M3.500 8.300a9.300 9.300 0 0 1 13 0M6.200 11a5.500 5.500 0 0 1 7.600 0" stroke="#191919" />
          <circle cx="10" cy="14" r="1.700" fill="#191919" />
        </svg>
        <svg viewBox="0 0 20 16" className="ml-[9px] h-4 w-5" fill="none" stroke="#191919" strokeWidth="1.300" strokeLinejoin="round">
          <path d="M1 5.500h3l5-4v13l-5-4H1ZM12.500 4.500l6 7M18.500 4.500l-6 7" />
        </svg>
        <svg viewBox="0 0 20 16" className="ml-[11px] h-4 w-5" fill="none" stroke="#191919" strokeWidth="1.300">
          <path d="M7 3.300h9a1.500 1.500 0 0 1 1.500 1.500v8A1.500 1.500 0 0 1 16 14.300H3a1.500 1.500 0 0 1-1.500-1.500V8" />
          <path d="M7.500 5.300h8v7h-12V9.500Z" fill="#191919" />
          <path d="M17.800 7h1.700v3.500h-1.700Z" fill="#191919" />
          <path d="M4 0 .5 5.500h2.200L2 9l4-5H3.600Z" fill="#191919" stroke="none" />
        </svg>
        <div className="mt-[-3px] ml-[19px] flex w-[78px] flex-col items-end text-[14.750px] leading-[20px]">
          <span>20:39</span>
          <span className="whitespace-nowrap">20-08-2025</span>
        </div>
      </div>
    </div>
  );
}

export default function App() {
  return (
    <div className="flex h-[1080px] w-[1920px] flex-col overflow-hidden bg-[#f7f7f6] font-['Noto_Sans',sans-serif]">
      <TabBar />
      <AddressBar />
      <div className="mx-[5px] flex h-[923px] shrink-0 flex-col overflow-hidden rounded-[10px] shadow-[0_0_2px_rgba(0,0,0,0.3)]">
        <NavHeader />
        <div className="flex min-h-0 flex-1">
          <Sidebar />
          <Main />
          <RightRail />
        </div>
        <Footer />
      </div>
      <div className="h-[4px] shrink-0" />
      <Taskbar />
    </div>
  );
}
